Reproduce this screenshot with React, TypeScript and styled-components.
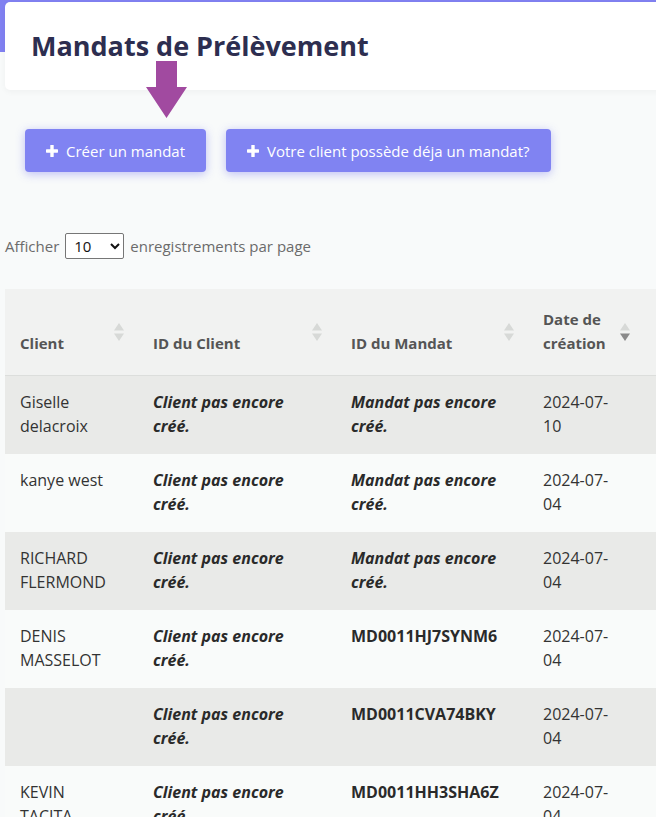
import React from 'react';
import styled, { createGlobalStyle } from 'styled-components';

interface Mandat {
  client: string;
  clientId: string | null;
  mandatId: string | null;
  createdAt: string;
}

const mandats: Mandat[] = [
  { client: 'Giselle delacroix', clientId: null, mandatId: null, createdAt: '2024-07-10' },
  { client: 'kanye west', clientId: null, mandatId: null, createdAt: '2024-07-04' },
  { client: 'RICHARD FLERMOND', clientId: null, mandatId: null, createdAt: '2024-07-04' },
  { client: 'DENIS MASSELOT', clientId: null, mandatId: 'MD0011HJ7SYNM6', createdAt: '2024-07-04' },
  { client: '', clientId: null, mandatId: 'MD0011CVA74BKY', createdAt: '2024-07-04' },
  { client: 'KEVIN TACITA', clientId: null, mandatId: 'MD0011HH3SHA6Z', createdAt: '2024-07-04' },
];

const columns = [
  { label: 'Client', width: 133, active: false, sortable: true },
  { label: 'ID du Client', width: 198, active: false, sortable: true },
  { label: 'ID du Mandat', width: 192, active: false, sortable: true },
  { label: 'Date de création', width: 116, active: true, sortable: true },
  { label: '', width: 140, active: false, sortable: false },
];

const SortIcon = ({ active }: { active: boolean }) => (
  <SortIconBox width="10" height="18" viewBox="0 0 10 18">
    <polygon points="5,0 10,7.5 0,7.5" fill="#d7d9d7" />
    <polygon points="0,10.5 10,10.5 5,18" fill={active ? '#8a8a8a' : '#d7d9d7'} />
  </SortIconBox>
);

const PlusIcon = () => (
  <svg width="12" height="12" viewBox="0 0 12 12">
    <rect x="4.3" y="0" width="3.4" height="12" rx="0.6" fill="#fff" />
    <rect x="0" y="4.3" width="12" height="3.4" rx="0.6" fill="#fff" />
  </svg>
);

const App = () => {
  return (
    <Page>
      <GlobalStyle />
      <HeaderCard>
        <Title>Mandats de Prélèvement</Title>
      </HeaderCard>

      <Arrow width="41" height="57" viewBox="0 0 41 57">
        <polygon points="10,0 31,0 31,26 41,26 20.5,57 0,26 10,26" fill="#a14aa0" />
      </Arrow>

      <Actions>
        <ActionButton>
          <PlusIcon />
          Créer un mandat
        </ActionButton>
        <ActionButton>
          <PlusIcon />
          Votre client possède déja un mandat?
        </ActionButton>
      </Actions>

      <LengthRow>
        Afficher
        <LengthSelect defaultValue="10">
          <option value="10">10</option>
          <option value="25">25</option>
          <option value="50">50</option>
          <option value="100">100</option>
        </LengthSelect>
        enregistrements par page
      </LengthRow>

      <Table>
        <colgroup>
          {columns.map((col, i) => (
            <col key={i} style={{ width: col.width }} />
          ))}
        </colgroup>
        <thead>
          <tr>
            {columns.map((col, i) => (
              <Th key={i}>
                {col.label}
                {col.sortable && <SortIcon active={col.active} />}
              </Th>
            ))}
          </tr>
        </thead>
        <tbody>
          {mandats.map((m, index) => (
            <Row key={index} $odd={index % 2 === 0}>
              <Td $padRight={20}>{m.client}</Td>
              <Td>{m.clientId ? <Code>{m.clientId}</Code> : <Pending>Client pas encore créé.</Pending>}</Td>
              <Td>{m.mandatId ? <Code>{m.mandatId}</Code> : <Pending>Mandat pas encore créé.</Pending>}</Td>
              <Td $padRight={24}>{m.createdAt}</Td>
              <Td />
            </Row>
          ))}
        </tbody>
      </Table>
    </Page>
  );
};

export default App;

const GlobalStyle = createGlobalStyle`
  html, body {
    margin: 0;
    padding: 0;
    background: #f8fafa;
    overflow: hidden;
  }
`;

const Page = styled.div`
  position: relative;
  width: 656px;
  height: 817px;
  overflow: hidden;
  padding-top: 2px;
  box-sizing: border-box;
  font-family: 'Open Sans', 'Noto Sans', sans-serif;

  &::before {
    content: '';
    position: absolute;
    left: 0;
    top: 0;
    width: 100%;
    height: 52px;
    background: #8181f1;
  }
`;

const HeaderCard = styled.div`
  position: relative;
  margin-left: 5px;
  height: 88px;
  width: 700px;
  box-sizing: border-box;
  padding: 27px 26px 0;
  background: #ffffff;
  border-radius: 5px;
  box-shadow: 0 2px 6px rgba(0, 0, 0, 0.04);
`;

const Title = styled.h1`
  margin: 0;
  font-family: 'Open Sans', 'Noto Sans', sans-serif;
  font-size: 27px;
  line-height: 34px;
  font-weight: 700;
  color: #2d2e50;
`;

const Arrow = styled.svg`
  position: absolute;
  left: 146px;
  top: 61px;
`;

const Actions = styled.div`
  display: flex;
  gap: 20px;
  padding-left: 25px;
  margin-top: 39px;
`;

const ActionButton = styled.button`
  display: flex;
  align-items: center;
  gap: 8px;
  height: 43px;
  padding: 0 21px;
  border: none;
  border-radius: 4px;
  background: #8083f2;
  color: #ffffff;
  font-family: 'Open Sans', 'Noto Sans', sans-serif;
  font-size: 15px;
  box-shadow: 0 2px 10px rgba(118, 120, 240, 0.45);
  cursor: pointer;
`;

const LengthRow = styled.div`
  display: flex;
  align-items: center;
  gap: 6px;
  margin-top: 61px;
  padding-left: 5px;
  height: 26px;
  font-size: 15px;
  color: #6b6b6b;
`;

const LengthSelect = styled.select`
  width: 59px;
  height: 26px;
  padding: 0 4px;
  border: 1px solid #767676;
  border-radius: 2px;
  background: #ffffff;
  color: #111;
  font-family: 'Open Sans', sans-serif;
  font-size: 15px;
`;

const Table = styled.table`
  margin: 30px 0 0 5px;
  border-collapse: collapse;
  table-layout: fixed;
  width: 779px;
  font-size: 15px;
  color: #333333;
`;

const Th = styled.th`
  position: relative;
  height: 86px;
  padding: 0 30px 20px 15px;
  background: #f1f2f1;
  border-bottom: 1px solid #dcdedc;
  vertical-align: bottom;
  text-align: left;
  font-weight: 700;
  color: #555555;
  line-height: 24px;
  box-sizing: border-box;
`;

const SortIconBox = styled.svg`
  position: absolute;
  right: 14px;
  top: 50%;
  transform: translateY(-50%);
`;

const Row = styled.tr<{ $odd: boolean }>`
  background: ${(p) => (p.$odd ? '#e9eae8' : '#f9fbfa')};
`;

const Td = styled.td<{ $padRight?: number }>`
  height: 78px;
  padding: 14px ${(p) => p.$padRight ?? 15}px 16px 15px;
  vertical-align: top;
  font-size: 16px;
  line-height: 24px;
  box-sizing: border-box;
  word-wrap: break-word;
`;

const Pending = styled.em`
  font-weight: 700;
  font-style: italic;
  color: #2a2a2a;
`;

const Code = styled.strong`
  font-weight: 700;
  color: #2a2a2a;
`;
